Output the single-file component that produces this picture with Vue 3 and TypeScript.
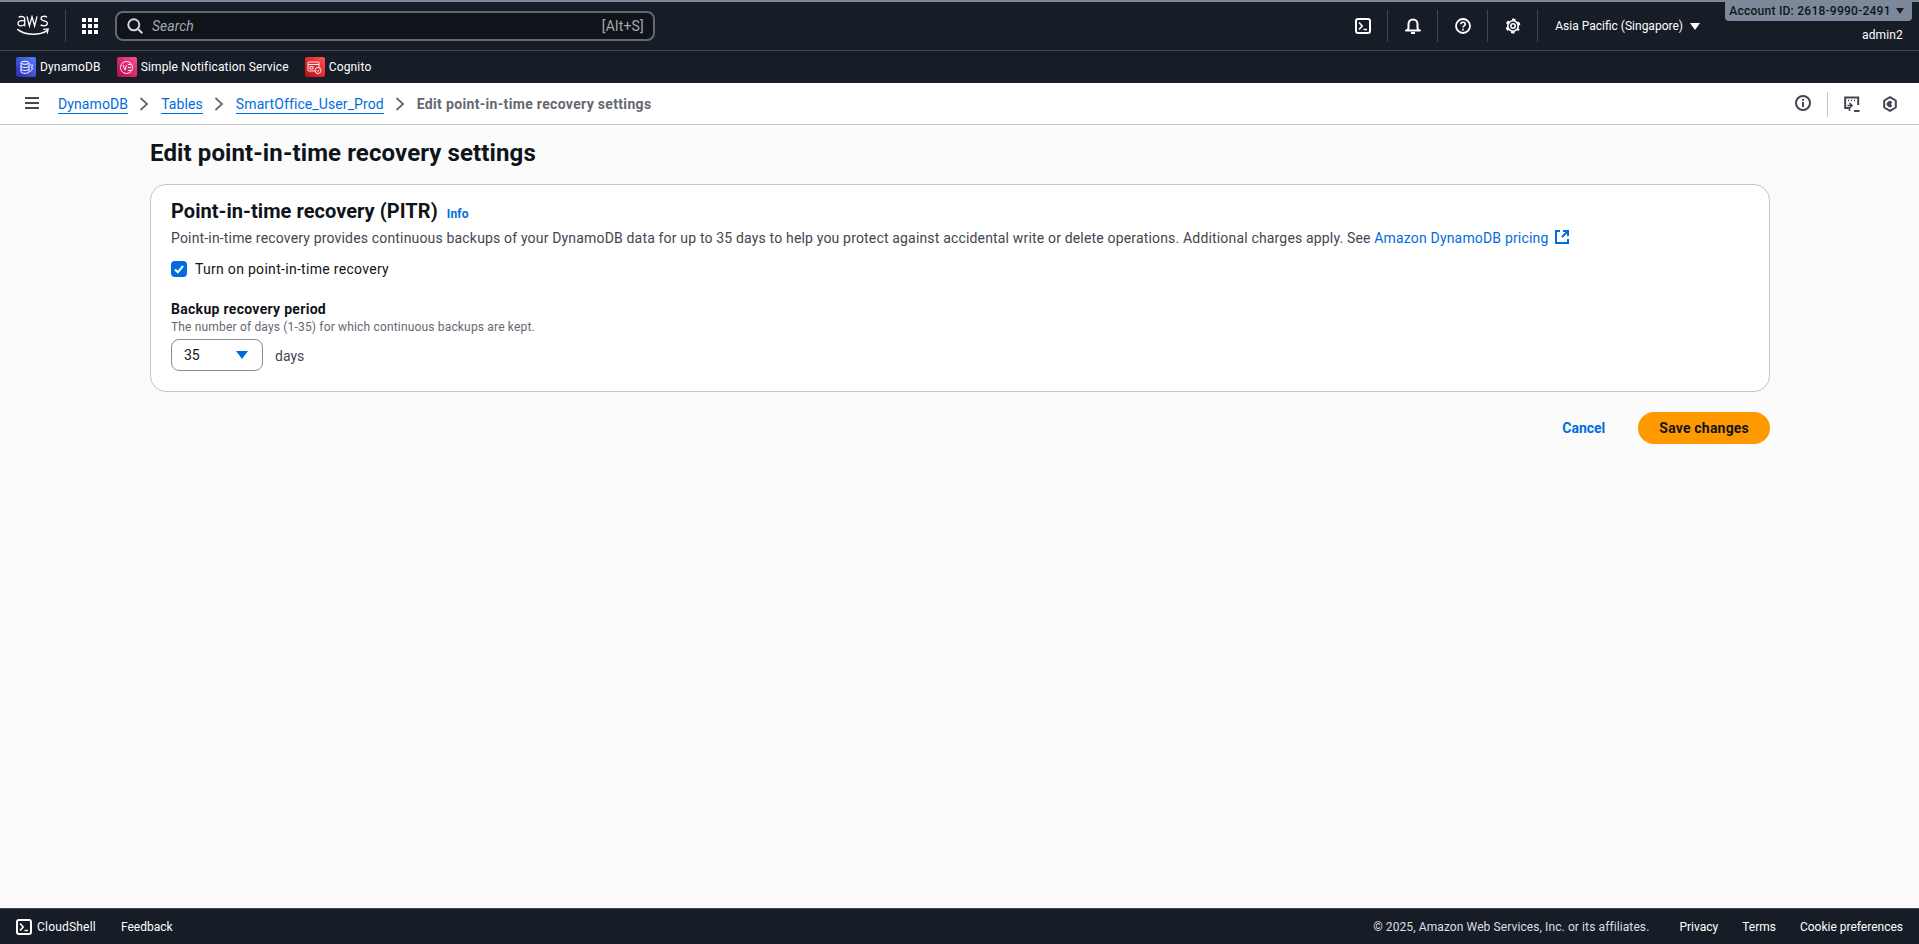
<script setup lang="ts">
interface Crumb {
  label: string;
}

const crumbs: Crumb[] = [{ label: 'DynamoDB' }, { label: 'Tables' }, { label: 'SmartOffice_User_Prod' }];
const footerLinks = ['Privacy', 'Terms', 'Cookie preferences'];
</script>

<template>
  <div class="page">
    <header class="top">
      <div class="top-row">
        <svg class="aws" width="32" height="22" viewBox="0 0 32 22" fill="none" stroke="#fff">
          <path d="M1.500 2.200C3 1.300 7.700.8 7.700 4v7.200M7.700 5.800C4.500 5.400 1 5.700 1 8.600c0 3 4.800 2.800 6.700.5" stroke-width="1.300" />
          <path d="M10 1.300l2.400 9.700 2.600-9.200 2.600 9.200 2.400-9.700" stroke-width="1.300" />
          <path d="M30 2.200c-1.700-1.300-6-1.500-6 1.200 0 3 6.400 1.800 6.400 4.900 0 2.900-4.500 3-6.800 1.600" stroke-width="1.300" />
          <path d="M.8 14.600c7.500 5.600 21 6.400 29.200 1" stroke-width="1.500" stroke-linecap="round" />
          <path d="M26.700 14.300l4.500-.4-.9 4.200" stroke-width="1.300" stroke-linecap="round" />
        </svg>
        <span class="vbar first"></span>
        <svg class="grid-ico" width="16" height="16" viewBox="0 0 16 16" fill="#fff">
          <rect x="0" y="0" width="4" height="4" /><rect x="6" y="0" width="4" height="4" /><rect x="12" y="0" width="4" height="4" />
          <rect x="0" y="6" width="4" height="4" /><rect x="6" y="6" width="4" height="4" /><rect x="12" y="6" width="4" height="4" />
          <rect x="0" y="12" width="4" height="4" /><rect x="6" y="12" width="4" height="4" /><rect x="12" y="12" width="4" height="4" />
        </svg>
        <div class="search">
          <svg width="16" height="16" viewBox="0 0 16 16" fill="none" stroke="#d1d5db" stroke-width="2">
            <circle cx="6.800" cy="6.800" r="5.500" /><path d="M10.800 10.800l4.500 4.500" />
          </svg>
          <span class="search-ph">Search</span>
          <span class="search-key">[Alt+S]</span>
        </div>
        <div class="top-right">
          <svg class="tico" width="16" height="16" viewBox="0 0 16 16" fill="none" stroke="#fff" stroke-width="2">
            <rect x="1" y="1" width="14" height="14" rx="2" /><path d="M4 4.500L7.200 8 4 11.500M8.500 11.500H12" stroke-width="1.600" />
          </svg>
          <span class="vbar"></span>
          <svg class="tico" width="16" height="16" viewBox="0 0 16 16" fill="none" stroke="#fff" stroke-width="2">
            <path d="M1 12.500c2 0 2.500-1.500 2.500-3V6a4.500 4.500 0 0 1 9 0v3.500c0 1.500.5 3 2.500 3zM6 15h4" stroke-linejoin="round" />
          </svg>
          <span class="vbar"></span>
          <svg class="tico" width="16" height="16" viewBox="0 0 16 16" fill="none" stroke="#fff" stroke-width="1.800">
            <circle cx="8" cy="8" r="7" /><path d="M5.800 6.200C5.900 3.600 10.200 3.700 10.200 6.200c0 1.700-2.200 1.700-2.200 3.400" stroke-width="1.600" /><path d="M8 10.800v1.700" stroke-width="1.700" />
          </svg>
          <span class="vbar"></span>
          <svg class="tico" width="16" height="16" viewBox="0 0 16 16" fill="none" stroke="#fff">
            <circle cx="8" cy="8" r="2.200" stroke-width="1.600" />
            <circle cx="8" cy="8" r="5.200" stroke-width="1.600" />
            <circle cx="8" cy="8" r="6.300" stroke-width="2.200" stroke-dasharray="3.200 3.397" stroke-dashoffset="1.600" transform="rotate(30 8 8)" />
          </svg>
          <span class="vbar"></span>
          <span class="region">Asia Pacific (Singapore)</span>
          <i class="caret-w"></i>
          <span class="user">admin2</span>
        </div>
        <div class="acct">Account ID: 2618-9990-2491 <i class="caret-d"></i></div>
      </div>
      <div class="fav-row">
        <div class="fav">
          <span class="svc ddb">
            <svg width="15" height="15" viewBox="0 0 15 15" fill="none" stroke="#fff" stroke-width="1">
              <ellipse cx="6" cy="2.800" rx="4" ry="1.500" /><path d="M2 2.800v9c0 2 8 2 8 0v-9M2 6c0 2 8 2 8 0M2 9c0 2 8 2 8 0" /><path d="M11 5h3l-2 3h2l-3 4" stroke-width=".8" />
            </svg>
          </span>
          DynamoDB
        </div>
        <div class="fav">
          <span class="svc sns">
            <svg width="15" height="15" viewBox="0 0 15 15" fill="none" stroke="#fff" stroke-width=".9">
              <circle cx="7.500" cy="7.500" r="6" /><path d="M4 5l2 5 1.500-5M9 4.500h3M9 7.500h3M9 10.500h3" />
            </svg>
          </span>
          Simple Notification Service
        </div>
        <div class="fav">
          <span class="svc cog">
            <svg width="15" height="15" viewBox="0 0 15 15" fill="none" stroke="#fff" stroke-width=".9">
              <rect x="1" y="2" width="11" height="9" rx=".8" /><path d="M1 4.500h11M3 6.500h3v2.500H3z" /><circle cx="11" cy="10.500" r="3" fill="#d7232f" /><path d="M9.800 10.500l1 1 1.500-1.800" />
            </svg>
          </span>
          Cognito
        </div>
      </div>
    </header>

    <nav class="crumb-bar">
      <svg class="burger" width="16" height="14" viewBox="0 0 16 14" fill="none" stroke="#424650" stroke-width="2">
        <path d="M1 2h14M1 7h14M1 12h14" />
      </svg>
      <template v-for="c in crumbs" :key="c.label">
        <a class="crumb">{{ c.label }}</a>
        <svg class="sep" width="12" height="16" viewBox="0 0 12 16" fill="none" stroke="#656871" stroke-width="1.800">
          <path d="M2.500 2l6.500 6-6.500 6" />
        </svg>
      </template>
      <span class="crumb-cur">Edit point-in-time recovery settings</span>
      <div class="crumb-tools">
        <svg class="t-info" width="16" height="16" viewBox="0 0 16 16" fill="none" stroke="#424650" stroke-width="2">
          <circle cx="8" cy="8" r="7" /><path d="M8 7v5M8 4v1.800" />
        </svg>
        <span class="tool-bar"></span>
        <svg width="16" height="16" viewBox="0 0 16 16" fill="none" stroke="#424650" stroke-width="2">
          <path d="M5 12H1.200V1.500h13V9" /><path d="M4 4.500h1M7 4.500h1M10 4.500h1" stroke-width="1.400" /><path d="M3.500 9.500h4M5.500 7l2.500 2.500L5.500 12v3" stroke-width="1.600" /><path d="M10 15h5.500" />
        </svg>
        <svg class="shield" width="16" height="16" viewBox="0 0 16 16" fill="none" stroke="#424650" stroke-width="2">
          <path d="M8 1.200l5.800 3.300v7L8 14.800l-5.800-3.300v-7z" stroke-linejoin="round" /><path d="M10 6.500a2.700 2.700 0 1 0 0 3.200L8 8z" fill="#424650" stroke-width="1" />
        </svg>
      </div>
    </nav>

    <main class="main">
      <h1>Edit point-in-time recovery settings</h1>
      <section class="card">
        <div class="card-head">
          <h2>Point-in-time recovery (PITR)</h2>
          <a class="info">Info</a>
        </div>
        <p class="desc">
          Point-in-time recovery provides continuous backups of your DynamoDB data for up to 35 days to help you protect against accidental write or delete operations. Additional charges apply. See
          <a class="ext">Amazon DynamoDB pricing
            <svg width="16" height="16" viewBox="0 0 16 16" fill="none" stroke="#006ce0" stroke-width="2">
              <path d="M6 2H2v12h12v-4" /><path d="M9 2h5v5M14 2L8 8" />
            </svg>
          </a>
        </p>
        <label class="check">
          <span class="box">
            <svg width="14" height="14" viewBox="0 0 14 14" fill="none" stroke="#fff" stroke-width="2">
              <path d="M3 7.500l2.800 2.800L11 4" />
            </svg>
          </span>
          Turn on point-in-time recovery
        </label>
        <div class="field-label">Backup recovery period</div>
        <div class="field-hint">The number of days (1-35) for which continuous backups are kept.</div>
        <div class="field-row">
          <div class="select">
            <span>35</span>
            <i class="caret-b"></i>
          </div>
          <span class="unit">days</span>
        </div>
      </section>
      <div class="actions">
        <a class="cancel">Cancel</a>
        <button class="save" type="button">Save changes</button>
      </div>
    </main>

    <footer class="foot">
      <svg width="16" height="16" viewBox="0 0 16 16" fill="none" stroke="#fff" stroke-width="2">
        <rect x="1" y="1" width="14" height="14" rx="2" /><path d="M4 4.500L7.200 8 4 11.500M8.500 11.500H12" stroke-width="1.600" />
      </svg>
      <span class="foot-shell">CloudShell</span>
      <span class="foot-fb">Feedback</span>
      <span class="foot-copy">© 2025, Amazon Web Services, Inc. or its affiliates.</span>
      <span v-for="l in footerLinks" :key="l" class="foot-link">{{ l }}</span>
    </footer>
  </div>
</template>

<style>
html,
body {
  margin: 0;
  background: #fbfbfb;
}
</style>

<style scoped>
.page {
  height: 944px;
  display: flex;
  flex-direction: column;
  font-family: Roboto, "Open Sans", sans-serif;
  font-size: 14px;
  color: #0f141a;
  background: #fbfbfb;
  overflow: hidden;
}
.top {
  background: #161d26;
  border-top: 2px solid #7d8998;
  color: #fff;
}
.top-row {
  position: relative;
  height: 48px;
  display: flex;
  align-items: center;
  padding: 0 16px 0 17px;
  border-bottom: 1px solid #424650;
}
.aws {
  display: block;
}
.vbar {
  width: 1px;
  height: 32px;
  background: #424650;
}
.vbar.first {
  margin-left: 16px;
}
.grid-ico {
  margin-left: 16px;
}
.search {
  margin-left: 17px;
  width: 540px;
  height: 30px;
  box-sizing: border-box;
  border: 2px solid #656871;
  border-radius: 8px;
  background: #0f141a;
  display: flex;
  align-items: center;
  padding: 0 9px 0 10px;
  font-size: 14px;
  color: #a4a8b0;
}
.search-ph {
  margin-left: 9px;
  font-style: italic;
}
.search-key {
  margin-left: auto;
  letter-spacing: 0.2px;
}
.top-right {
  margin-left: auto;
  display: flex;
  align-items: center;
}
.tico {
  margin: 0 16px 0 17px;
}
.region {
  margin-left: 17px;
  font-size: 12px;
}
.caret-w {
  margin-left: 7px;
  border: 5px solid transparent;
  border-top: 7px solid #fff;
  border-bottom: 0;
}
.user {
  margin-left: 162px;
  margin-top: 18px;
  font-size: 12px;
  letter-spacing: 0.15px;
}
.acct {
  position: absolute;
  top: 0;
  right: 7px;
  height: 19px;
  padding: 0 8px 0 4px;
  background: #7d8998;
  border-radius: 0 0 4px 4px;
  color: #0f141a;
  font-size: 12px;
  font-weight: 500;
  line-height: 18px;
  letter-spacing: 0.25px;
  white-space: nowrap;
}
.caret-d {
  display: inline-block;
  border: 4px solid transparent;
  border-top: 6px solid #161d26;
  border-bottom: 0;
  vertical-align: 1px;
  margin-left: 2px;
}
.fav-row {
  height: 32px;
  display: flex;
  align-items: center;
  padding-left: 16px;
  gap: 16px;
}
.fav {
  display: flex;
  align-items: center;
  gap: 4px;
  font-size: 12px;
  letter-spacing: 0.15px;
}
.svc {
  width: 20px;
  height: 20px;
  border-radius: 2px;
  display: flex;
  align-items: center;
  justify-content: center;
}
.ddb {
  background: linear-gradient(45deg, #2e27ad, #527fff);
}
.sns {
  background: linear-gradient(45deg, #b0084d, #ff4f8b);
}
.cog {
  background: linear-gradient(45deg, #bd0816, #ff5252);
}
.crumb-bar {
  height: 42px;
  box-sizing: border-box;
  display: flex;
  align-items: center;
  background: #fff;
  border-bottom: 1px solid #c6c6cd;
  padding: 1px 21px 0 24px;
  font-size: 14px;
}
.burger {
  margin-right: 18px;
  margin-top: -3px;
}
.crumb {
  color: #006ce0;
  border-bottom: 1px solid #006ce0;
  line-height: 18px;
  letter-spacing: 0.1px;
}
.sep {
  margin: 0 11px 0 10px;
}
.crumb-cur {
  color: #656871;
  font-weight: 700;
  letter-spacing: 0.33px;
}
.crumb-tools {
  margin-left: auto;
  display: flex;
  align-items: center;
  gap: 16px;
}
.t-info {
  margin-top: -2px;
}
.tool-bar {
  width: 1px;
  height: 25px;
  background: #c6c6cd;
}
.shield {
  margin-left: 6px;
}
.main {
  flex: 1;
  padding: 13px 149px 0 150px;
}
h1 {
  margin: 0;
  font-size: 24px;
  line-height: 30px;
  font-weight: 700;
  letter-spacing: 0.11px;
  color: #0f141a;
}
.card {
  margin-top: 16px;
  background: #fff;
  border: 1px solid #c6c6cd;
  border-radius: 16px;
  padding: 14px 20px 20px;
  height: 208px;
  box-sizing: border-box;
}
.card-head {
  display: flex;
  align-items: baseline;
  gap: 9px;
}
h2 {
  margin: 0;
  font-size: 20px;
  line-height: 24px;
  font-weight: 700;
  letter-spacing: 0.05px;
}
.info {
  color: #006ce0;
  font-size: 12px;
  font-weight: 700;
  letter-spacing: 0.2px;
}
.desc {
  margin: 5px 0 0;
  line-height: 20px;
  color: #424650;
  letter-spacing: 0.17px;
}
.ext {
  color: #006ce0;
}
.ext svg {
  vertical-align: -2px;
  margin-left: 2px;
}
.check {
  margin-top: 11px;
  display: flex;
  align-items: center;
  gap: 8px;
  line-height: 20px;
  letter-spacing: 0.3px;
}
.box {
  width: 16px;
  height: 16px;
  border-radius: 4px;
  background: #006ce0;
  display: flex;
  align-items: center;
  justify-content: center;
}
.field-label {
  margin-top: 21px;
  font-weight: 700;
  line-height: 18px;
  letter-spacing: 0.3px;
}
.field-hint {
  font-size: 12px;
  line-height: 18px;
  color: #656871;
  letter-spacing: 0.17px;
}
.field-row {
  margin-top: 3px;
  display: flex;
  align-items: center;
  gap: 12px;
}
.select {
  width: 92px;
  height: 32px;
  box-sizing: border-box;
  border: 1px solid #8c8c94;
  border-radius: 8px;
  display: flex;
  align-items: center;
  justify-content: space-between;
  padding: 0 14px 0 12px;
}
.caret-b {
  border: 6px solid transparent;
  border-top: 8px solid #006ce0;
  border-bottom: 0;
}
.unit {
  color: #424650;
  margin-top: 1px;
}
.actions {
  margin-top: 20px;
  display: flex;
  justify-content: flex-end;
  align-items: center;
  gap: 33px;
}
.cancel {
  color: #006ce0;
  font-weight: 700;
}
.save {
  height: 32px;
  padding: 0 21px;
  border: 0;
  border-radius: 16px;
  background: #ff9900;
  color: #0f141a;
  font: 700 14px Roboto, "Open Sans", sans-serif;
  letter-spacing: 0.2px;
}
.foot {
  height: 35px;
  border-top: 1px solid #424650;
  background: #161d26;
  color: #fff;
  display: flex;
  align-items: center;
  padding: 0 16px;
  font-size: 12px;
}
.foot-shell {
  margin-left: 5px;
  letter-spacing: 0.2px;
}
.foot-fb {
  margin-left: 25px;
}
.foot-copy {
  margin-left: auto;
  margin-right: 6px;
  color: #dedee3;
  letter-spacing: 0.1px;
}
.foot-link {
  margin-left: 24px;
}
</style>
